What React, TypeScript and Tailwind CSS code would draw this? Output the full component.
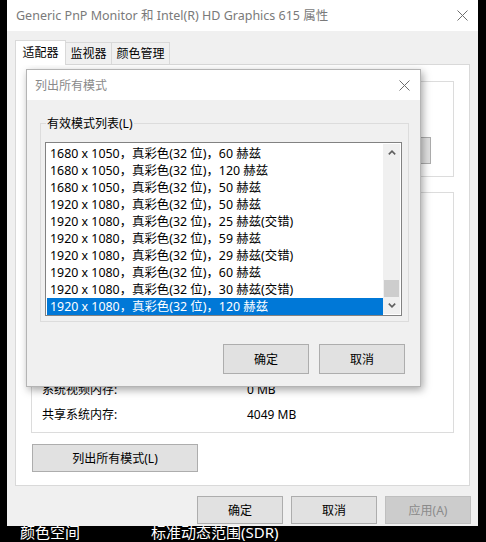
import type { ReactNode } from 'react'

const modes = [
  '1680 x 1050，真彩色(32 位)，60 赫兹',
  '1680 x 1050，真彩色(32 位)，120 赫兹',
  '1680 x 1050，真彩色(32 位)，50 赫兹',
  '1920 x 1080，真彩色(32 位)，50 赫兹',
  '1920 x 1080，真彩色(32 位)，25 赫兹(交错)',
  '1920 x 1080，真彩色(32 位)，59 赫兹',
  '1920 x 1080，真彩色(32 位)，29 赫兹(交错)',
  '1920 x 1080，真彩色(32 位)，60 赫兹',
  '1920 x 1080，真彩色(32 位)，30 赫兹(交错)',
  '1920 x 1080，真彩色(32 位)，120 赫兹',
]

// 其余信息行被对话框遮住，只留下可见的两行
const infoRows = [
  ['系统视频内存:', '0 MB'],
  ['共享系统内存:', '4049 MB'],
]

function CloseIcon() {
  return (
    <svg width="11" height="11" viewBox="0 0 11 11" fill="none">
      <path d="M0.5 0.5L10.5 10.5M10.5 0.5L0.5 10.5" stroke="#6e6e6e" strokeWidth="1" />
    </svg>
  )
}

function Chevron({ up }: { up?: boolean }) {
  return (
    <svg width="8" height="5" viewBox="0 0 8 5" fill="none">
      <path
        d={up ? 'M0.8 4.4L4 1.2L7.2 4.4' : 'M0.8 0.6L4 3.8L7.2 0.6'}
        stroke="#606060"
        strokeWidth="1.6"
      />
    </svg>
  )
}

function Btn({
  children,
  className = '',
  disabled,
}: {
  children?: ReactNode
  className?: string
  disabled?: boolean
}) {
  return (
    <div
      className={
        'flex items-center justify-center border text-[12px] ' +
        (disabled
          ? 'bg-[#cccccc] border-[#bfbfbf] text-[#8a8a8a] '
          : 'bg-[#e1e1e1] border-[#adadad] text-black ') +
        className
      }
    >
      {children}
    </div>
  )
}

export default function App() {
  return (
    <div className="relative w-[486px] h-[542px] bg-black overflow-hidden font-['Noto_Sans','Noto_Sans_CJK_SC',sans-serif] text-[12px] leading-[17px]">
      {/* 属性窗口 */}
      <div className="ml-[7px] w-[471px] h-[526px] flex flex-col bg-[#f0f0f0]">
        <div className="h-[31px] shrink-0 bg-white flex items-center justify-between pl-[9px] pr-[10px]">
          <span className="text-[12.5px] text-[#7a7a7a]">
            Generic PnP Monitor 和 Intel(R) HD Graphics 615 属性
          </span>
          <CloseIcon />
        </div>

        {/* Tabs */}
        <div className="px-[8px] pt-[9px]">
          <div className="flex items-end -mb-px relative z-10">
            <div className="h-[25px] w-[51px] bg-white border border-b-0 border-[#d9d9d9] flex items-center justify-center pb-[1px]">
              适配器
            </div>
            <div className="h-[22px] w-[47px] mb-px -ml-px bg-[#f0f0f0] border border-b-0 border-[#d9d9d9] flex items-center justify-center">
              监视器
            </div>
            <div className="h-[22px] w-[59px] mb-px -ml-px bg-[#f0f0f0] border border-b-0 border-[#d9d9d9] flex items-center justify-center">
              颜色管理
            </div>
          </div>

          <div className="h-[422px] bg-white border border-[#d9d9d9] pl-[15px] pt-[16px]">
            <div className="h-[96px] w-[423px] border border-[#dcdcdc] flex justify-end items-start pt-[55px] pr-[22px]">
              <Btn className="w-[86px] h-[27px]" />
            </div>
            <div className="mt-[15px] h-[241px] w-[423px] border border-[#dcdcdc] flex flex-col justify-end pb-[5px] pl-[10px]">
              {infoRows.map(([k, v]) => (
                <div key={k} className="h-[25px] flex items-center">
                  <span className="w-[205px]">{k}</span>
                  <span>{v}</span>
                </div>
              ))}
            </div>
            <Btn className="mt-[11px] ml-px w-[166px] h-[28px]">列出所有模式(L)</Btn>
          </div>
        </div>

        <div className="mt-[10px] flex justify-end gap-[8px] pr-[7px]">
          <Btn className="w-[86px] h-[28px]">确定</Btn>
          <Btn className="w-[86px] h-[28px]">取消</Btn>
          <Btn className="w-[86px] h-[28px]" disabled>
            应用(A)
          </Btn>
        </div>
      </div>

      {/* 背景中的设置页文字，被窗口遮住上沿 */}
      <div className="h-[16px] overflow-hidden text-white text-[15px] leading-[20px]">
        <div className="-mt-[4px] flex pl-[20px]">
          <span className="w-[131px]">颜色空间</span>
          <span>标准动态范围(SDR)</span>
        </div>
      </div>

      {/* 列出所有模式 对话框 */}
      <div className="absolute left-[26px] top-[69px] w-[395px] h-[318px] flex flex-col border border-[#b4b4b4] shadow-[2px_3px_8px_rgba(0,0,0,0.35)]">
        <div className="h-[30px] shrink-0 bg-white flex items-center justify-between pl-[8px] pr-[10px]">
          <span className="text-[#8a8a8a]">列出所有模式</span>
          <CloseIcon />
        </div>
        <div className="flex-1 bg-[#f0f0f0] pl-[13px] pt-[15px]">
          <fieldset className="w-[369px] h-[207px] border border-[#dcdcdc] px-[4px]">
            <legend className="ml-[1px] px-[1px] leading-[17px]">有效模式列表(L)</legend>
            <div className="mt-[10px] w-[357px] h-[174px] border border-[#828282] bg-white flex p-px">
              <div className="flex-1 pt-px">
                {modes.map((m, i) => (
                  <div
                    key={m}
                    className={
                      'h-[17px] pl-[3px] whitespace-nowrap text-[12.4px] ' +
                      (i === modes.length - 1 ? 'bg-[#0078d7] text-white' : 'text-black')
                    }
                  >
                    {m}
                  </div>
                ))}
              </div>
              <div className="w-[17px] bg-[#f0f0f0] flex flex-col">
                <div className="h-[17px] flex items-center justify-center">
                  <Chevron up />
                </div>
                <div className="flex-1 flex flex-col justify-end">
                  <div className="h-[17px] mx-px bg-[#cdcdcd]" />
                </div>
                <div className="h-[17px] flex items-center justify-center">
                  <Chevron />
                </div>
              </div>
            </div>
          </fieldset>
          <div className="mt-[22px] flex justify-end gap-[10px] pr-[15px]">
            <Btn className="w-[86px] h-[30px]">确定</Btn>
            <Btn className="w-[86px] h-[30px]">取消</Btn>
          </div>
        </div>
      </div>
    </div>
  )
}
